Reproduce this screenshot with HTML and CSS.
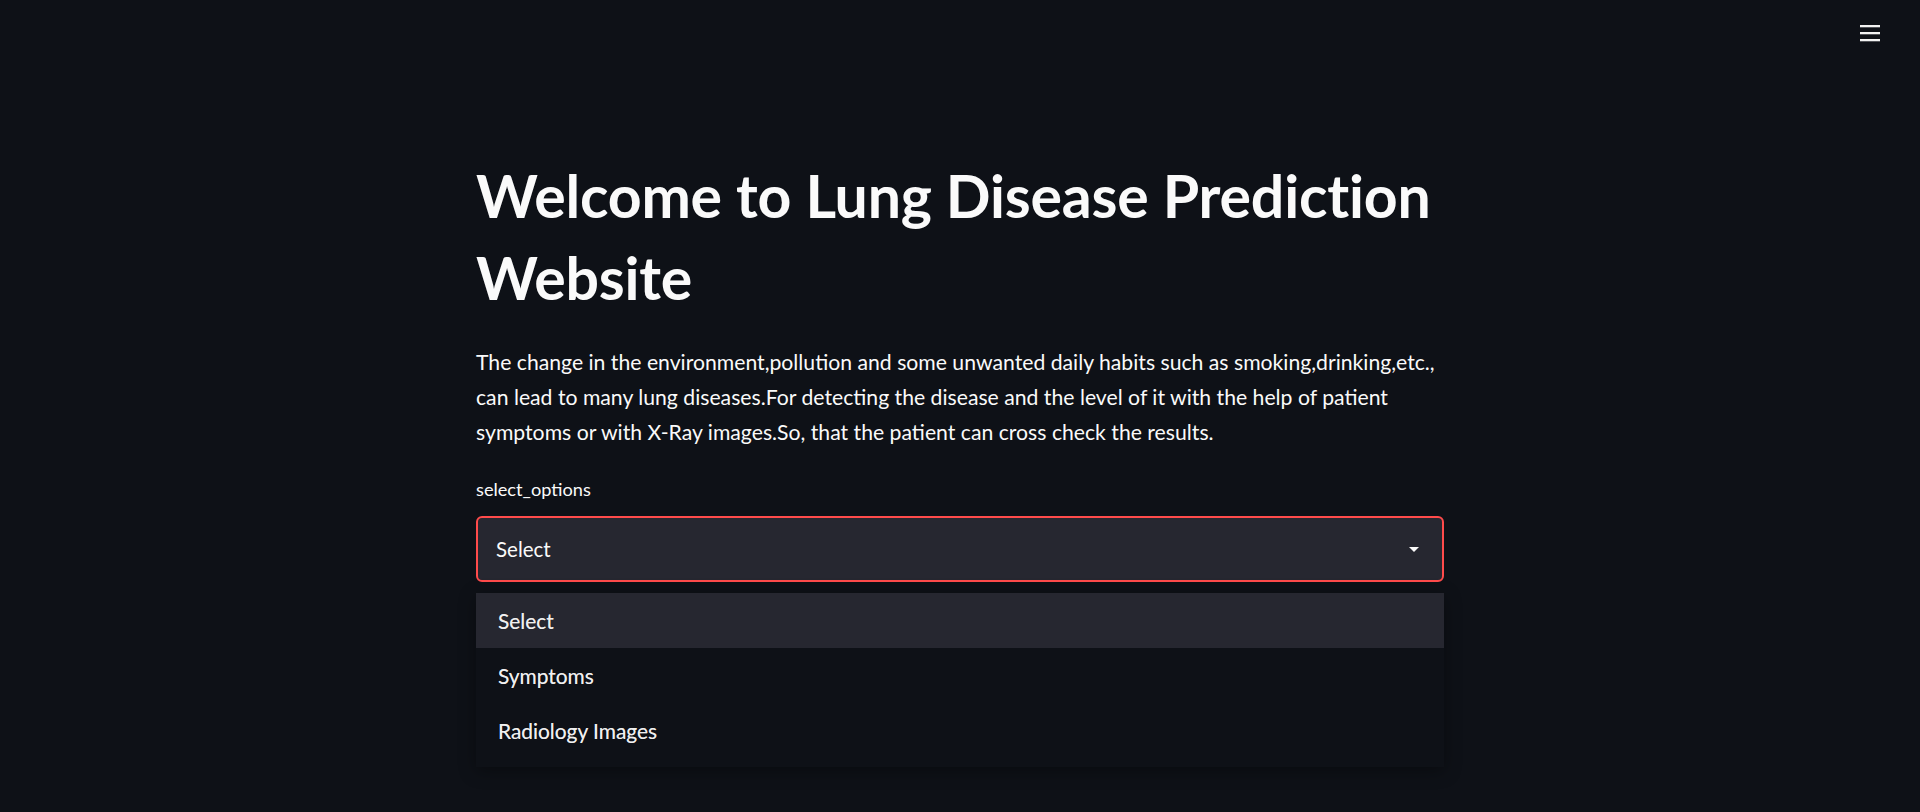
FILE: index.html
```html
<!DOCTYPE html>
<html lang="en">
<head>
<meta charset="utf-8">
<title>Lung Disease Prediction</title>
<link rel="stylesheet" href="styles.css">
</head>
<body>
<div class="app">
  <header class="toolbar">
    <button class="menu-btn" aria-label="Main menu">
      <svg width="20" height="18" viewBox="0 0 20 18" class="burger">
        <rect x="0" y="0" width="20" height="2.3" />
        <rect x="0" y="7" width="20" height="2.3" />
        <rect x="0" y="14" width="20" height="2.3" />
      </svg>
    </button>
  </header>
  <main class="block">
    <h1 class="title">Welcome to Lung Disease Prediction Website</h1>
    <p class="intro">The change in the environment,pollution and some unwanted daily habits such as smoking,drinking,etc., can lead to many lung diseases.For detecting the disease and the level of it with the help of patient symptoms or with X-Ray images.So, that the patient can cross check the results.</p>
    <div class="field">
      <label class="field-label">select_options</label>
      <div class="select-wrap">
        <div class="select">
          <span class="select-value">Select</span>
          <svg class="caret" width="10" height="5" viewBox="0 0 10 5"><path d="M0 0 H10 L5 5 Z"/></svg>
        </div>
        <ul class="dropdown">
          <li class="option active">Select</li>
          <li class="option">Symptoms</li>
          <li class="option">Radiology Images</li>
        </ul>
      </div>
    </div>
  </main>
</div>
</body>
</html>
```

FILE: styles.css
```css
html, body {
  margin: 0;
  padding: 0;
  background: #0e1117;
  color: #fafafa;
  font-family: Lato, "Open Sans", sans-serif;
}

.app {
  min-height: 812px;
}

.toolbar {
  height: 68px;
  display: flex;
  justify-content: flex-end;
  align-items: flex-start;
  padding-right: 40px;
}

.menu-btn {
  background: none;
  border: 0;
  padding: 0;
  margin-top: 25px;
  width: 20px;
  height: 18px;
  cursor: pointer;
}

.burger {
  display: block;
  fill: #f2f2f2;
}

.block {
  width: 968px;
  margin: 0 auto;
  padding-top: 87px;
}

.title {
  margin: 0;
  font-size: 59px;
  line-height: 82px;
  font-weight: 700;
  letter-spacing: -0.2px;
}

.intro {
  margin: 26px 0 0;
  font-size: 21.2px;
  line-height: 35px;
}

.field {
  margin-top: 27px;
}

.field-label {
  display: block;
  font-size: 18.2px;
  line-height: 24px;
  margin-bottom: 15px;
}

.select-wrap {
  position: relative;
}

.select {
  box-sizing: border-box;
  height: 66px;
  background: #262730;
  border: 2px solid #ff4b4b;
  border-radius: 6px;
  display: flex;
  align-items: center;
  justify-content: space-between;
  padding: 0 23px 0 18px;
  font-size: 20.5px;
}

.caret {
  display: block;
  fill: #fafafa;
}

.dropdown {
  position: absolute;
  left: 0;
  right: 0;
  top: calc(100% + 11px);
  margin: 0;
  padding: 0 0 9px;
  list-style: none;
  background: #0e1117;
  box-shadow: 0 4px 16px rgba(0, 0, 0, 0.35);
}

.option {
  height: 55px;
  display: flex;
  align-items: center;
  padding-left: 22px;
  font-size: 20.9px;
  color: #f0f0f0;
  text-shadow: 0 0 0.4px rgba(240, 240, 240, 0.6);
}

.option.active {
  background: #262730;
}
```
